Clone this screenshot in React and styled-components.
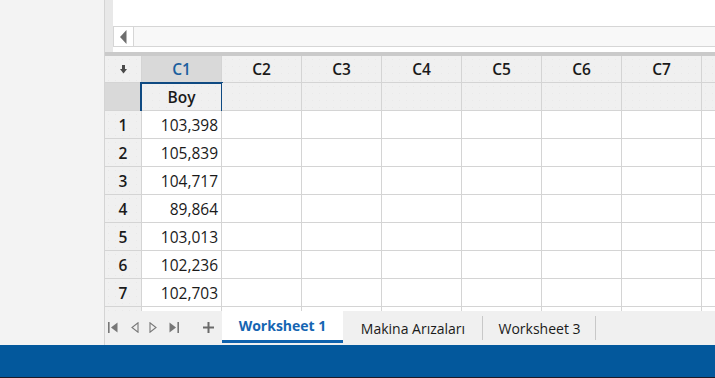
import styled, { createGlobalStyle } from "styled-components";

const GlobalStyle = createGlobalStyle`
  body {
    margin: 0;
    font-family: "Open Sans", "Noto Sans", sans-serif;
    color: #1a1a1a;
  }
`;

const Frame = styled.div`
  width: 715px;
  height: 378px;
  display: flex;
  flex-direction: column;
  overflow: hidden;
`;

const Main = styled.div`
  flex: 1;
  display: flex;
  min-height: 0;
`;

const SidePanel = styled.div`
  width: 104px;
  background: #f3f3f3;
  border-right: 1px solid #d4d4d4;
`;

const Content = styled.div`
  flex: 1;
  display: flex;
  flex-direction: column;
  min-width: 0;
`;

const TopArea = styled.div`
  height: 52px;
  display: flex;
`;

const Strip = styled.div`
  width: 8px;
  background: #e8e8e8;
`;

const TopWhite = styled.div`
  flex: 1;
  background: #fff;
  padding-top: 26px;
`;

const ScrollBar = styled.div`
  height: 21px;
  box-sizing: border-box;
  border-top: 1px solid #d6d6d6;
  border-bottom: 1px solid #d6d6d6;
  display: flex;
  background: #f8f8f8;
`;

const ArrowButton = styled.div`
  width: 21px;
  box-sizing: border-box;
  border-left: 1px solid #d6d6d6;
  border-right: 1px solid #d6d6d6;
  background: #fff;
  display: flex;
  align-items: center;
  justify-content: center;
`;

const Divider = styled.div`
  height: 4px;
  background: #cacaca;
`;

const Grid = styled.div`
  flex: 1;
  min-height: 0;
  overflow: hidden;
  display: grid;
  grid-template-columns: 37px repeat(8, 80px);
  grid-template-rows: 27px repeat(9, 28px);
  background: #fff;
`;

const Cell = styled.div`
  position: relative;
  box-sizing: border-box;
  border-right: 1px solid #d4d4d4;
  border-bottom: 1px solid #d4d4d4;
  display: flex;
  align-items: center;
  justify-content: ${(p) => (p.$align === "right" ? "flex-end" : "center")};
  padding-right: ${(p) => (p.$align === "right" ? "3px" : "0")};
  font-size: 15.5px;
  font-weight: ${(p) => (p.$bold ? 600 : 400)};
  color: ${(p) => (p.$blue ? "#1b5f9e" : "#1a1a1a")};
  background-color: ${(p) =>
    p.$selected ? "#d9d9d9" : p.$gray ? "#f0f0f0" : "#fff"};
  background-image: ${(p) =>
    p.$gray && !p.$selected
      ? "radial-gradient(circle, #e9e9e9 0.5px, transparent 0.7px)"
      : "none"};
  background-size: 7px 7px;
  white-space: nowrap;
`;

const Selection = styled.div`
  position: absolute;
  top: -1px;
  left: -2px;
  right: -2px;
  bottom: -3px;
  border: 2px solid #0f4a82;
  pointer-events: none;
`;

const Handle = styled.div`
  position: absolute;
  right: -4px;
  bottom: -4px;
  width: 4px;
  height: 4px;
  background: #0f4a82;
`;

const TabBar = styled.div`
  height: 34px;
  background: #f0f0f0;
  display: flex;
  align-items: stretch;
`;

const NavGroup = styled.div`
  width: 117px;
  flex-shrink: 0;
  display: flex;
  align-items: center;
`;

const NavButton = styled.div`
  margin-left: ${(p) => p.$ml}px;
  display: flex;
  align-items: center;
  padding-bottom: 1px;
`;

const Tab = styled.div`
  width: ${(p) => p.$w}px;
  box-sizing: border-box;
  display: flex;
  align-items: center;
  justify-content: center;
  font-size: 14px;
  margin-bottom: ${(p) => (p.$active ? "2px" : "0")};
  font-weight: ${(p) => (p.$active ? 700 : 400)};
  color: ${(p) => (p.$active ? "#1565b2" : "#1a1a1a")};
  background: ${(p) => (p.$active ? "#fff" : "transparent")};
  border-bottom: ${(p) => (p.$active ? "3px solid #0f62ad" : "none")};
  position: relative;

  &::after {
    content: "";
    display: ${(p) => (p.$sep ? "block" : "none")};
    position: absolute;
    right: 0;
    top: 5px;
    bottom: 5px;
    width: 1px;
    background: #c8c8c8;
  }
`;

const StatusBar = styled.div`
  height: 32px;
  background: #03589c;
  border-bottom: 1px solid #1c1c28;
`;

const columns = ["C1", "C2", "C3", "C4", "C5", "C6", "C7", ""];
const values = [
  "103,398",
  "105,839",
  "104,717",
  "89,864",
  "103,013",
  "102,236",
  "102,703",
  "",
];

const DownArrow = () => (
  <svg width="7" height="9" viewBox="0 0 7 9">
    <rect x="2" y="0" width="3" height="4" fill="#4a4a4a" />
    <polygon points="0,4 7,4 3.5,8.5" fill="#4a4a4a" />
  </svg>
);

const LeftTriangle = () => (
  <svg width="7" height="14" viewBox="0 0 7 14">
    <polygon points="6.5,0 6.5,14 0,7" fill="#6e6e6e" />
  </svg>
);

const NavIcon = ({ type }) => {
  const stroke = "#777";
  if (type === "first")
    return (
      <svg width="10" height="11" viewBox="0 0 10 11">
        <rect x="0" y="0" width="1.6" height="11" fill={stroke} />
        <polygon points="9.5,0.5 9.5,10.5 3,5.5" fill={stroke} />
      </svg>
    );
  if (type === "last")
    return (
      <svg width="10" height="11" viewBox="0 0 10 11">
        <polygon points="0.5,0.5 0.5,10.5 7,5.5" fill={stroke} />
        <rect x="8.4" y="0" width="1.6" height="11" fill={stroke} />
      </svg>
    );
  if (type === "prev")
    return (
      <svg width="8" height="11" viewBox="0 0 8 11">
        <polygon
          points="7,0.8 7,10.2 1,5.5"
          fill="none"
          stroke={stroke}
          strokeWidth="1.1"
        />
      </svg>
    );
  return (
    <svg width="8" height="11" viewBox="0 0 8 11">
      <polygon
        points="1,0.8 1,10.2 7,5.5"
        fill="none"
        stroke={stroke}
        strokeWidth="1.1"
      />
    </svg>
  );
};

const Plus = () => (
  <svg width="11" height="11" viewBox="0 0 11 11">
    <rect x="0" y="4.5" width="11" height="2" fill="#6a6a6a" />
    <rect x="4.5" y="0" width="2" height="11" fill="#6a6a6a" />
  </svg>
);

const App = () => {
  return (
    <Frame>
      <GlobalStyle />
      <Main>
        <SidePanel />
        <Content>
          <TopArea>
            <Strip />
            <TopWhite>
              <ScrollBar>
                <ArrowButton>
                  <LeftTriangle />
                </ArrowButton>
              </ScrollBar>
            </TopWhite>
          </TopArea>
          <Divider />
          <Grid>
            <Cell $gray>
              <DownArrow />
            </Cell>
            {columns.map((c, i) => (
              <Cell key={c + i} $gray $bold $selected={i === 0} $blue={i === 0}>
                {c}
              </Cell>
            ))}

            <Cell $gray $selected />
            {columns.map((c, i) => (
              <Cell key={"n" + i} $gray $bold>
                {i === 0 && (
                  <>
                    Boy
                    <Selection />
                    <Handle />
                  </>
                )}
              </Cell>
            ))}

            {values.map((v, r) => [
              <Cell key={"h" + r} $gray $bold>
                {v ? r + 1 : ""}
              </Cell>,
              ...columns.map((c, i) => (
                <Cell key={r + "-" + i} $align="right">
                  {i === 0 ? v : ""}
                </Cell>
              )),
            ])}
          </Grid>
          <TabBar>
            <NavGroup>
              <NavButton $ml={3}>
                <NavIcon type="first" />
              </NavButton>
              <NavButton $ml={13}>
                <NavIcon type="prev" />
              </NavButton>
              <NavButton $ml={10}>
                <NavIcon type="next" />
              </NavButton>
              <NavButton $ml={12}>
                <NavIcon type="last" />
              </NavButton>
              <NavButton $ml={24}>
                <Plus />
              </NavButton>
            </NavGroup>
            <Tab $active $w={121}>
              Worksheet 1
            </Tab>
            <Tab $sep $w={140}>
              Makina Arızaları
            </Tab>
            <Tab $sep $w={113}>
              Worksheet 3
            </Tab>
          </TabBar>
        </Content>
      </Main>
      <StatusBar />
    </Frame>
  );
};

export default App;
